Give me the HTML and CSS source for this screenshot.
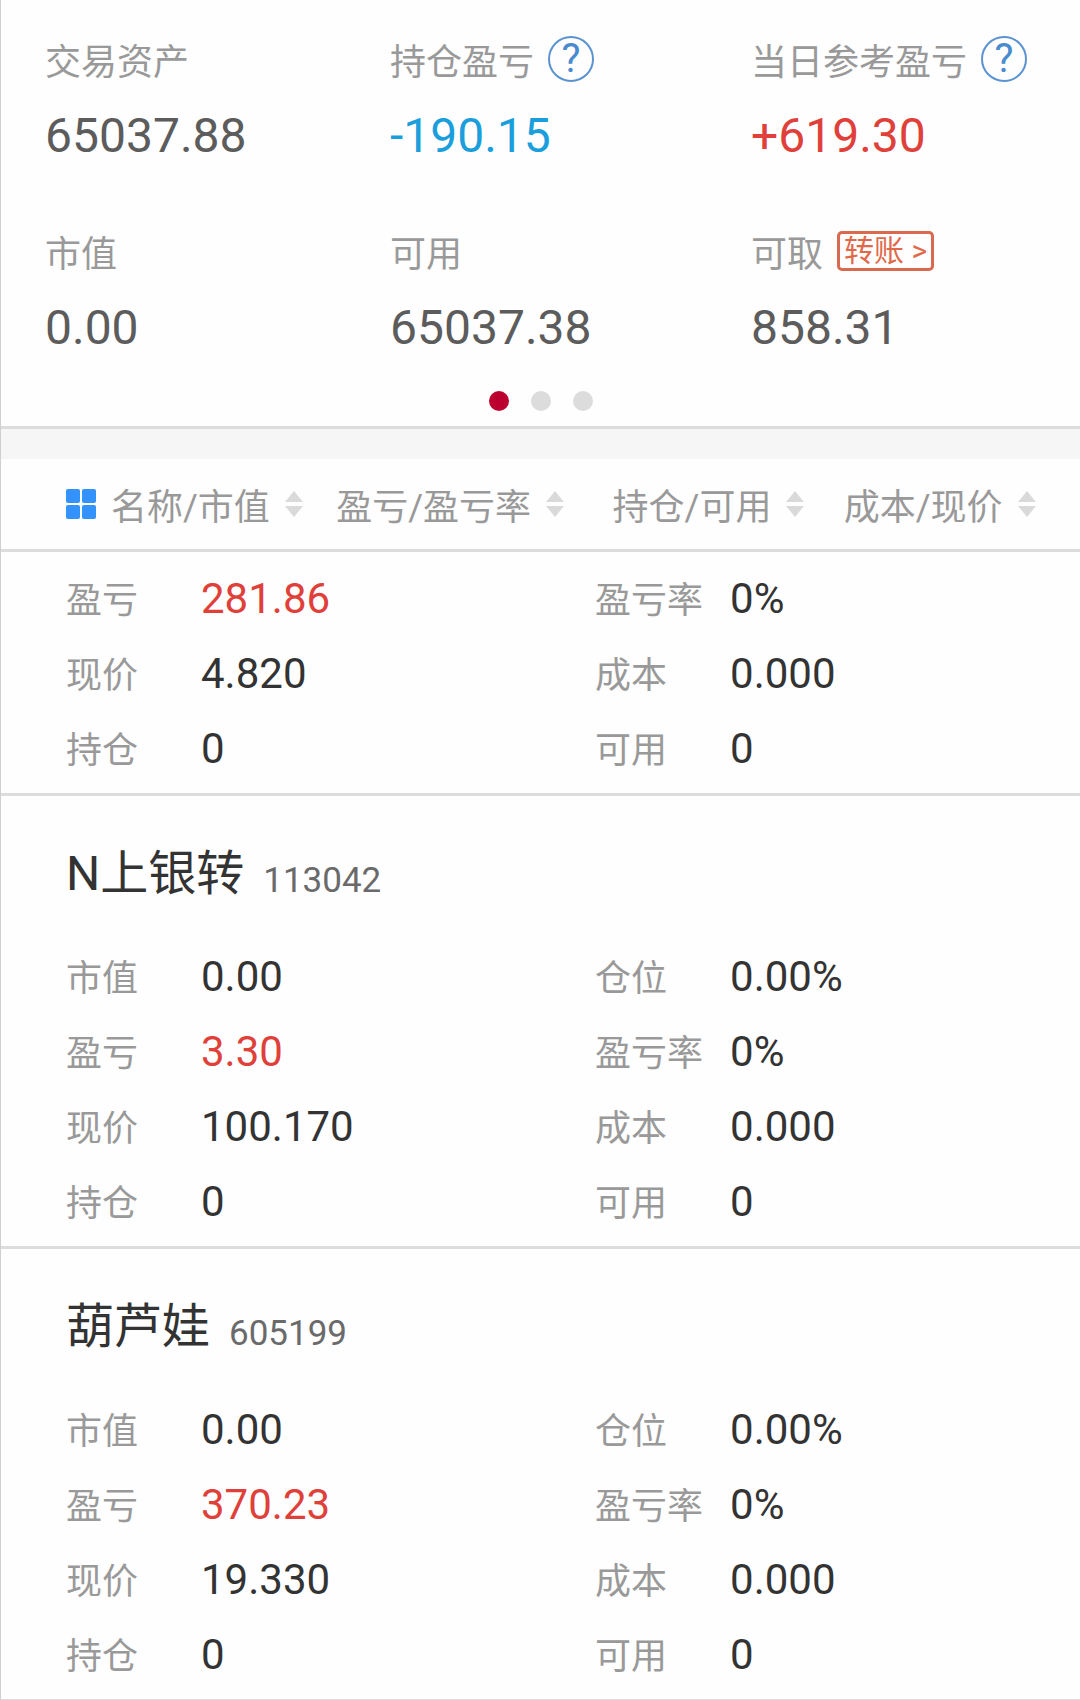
FILE: index.html
```html
<!DOCTYPE html>
<html lang="zh-CN">
<head>
  <meta charset="UTF-8" />
  <meta name="viewport" content="width=device-width, initial-scale=1.0" />
  <title>持仓</title>
  <link rel="stylesheet" href="styles.css">
</head>
<body>
  <section class="summary">
    <div class="summary-grid">
      <div class="cell">
        <div class="cell-label">交易资产</div>
        <div class="cell-value">65037.88</div>
      </div>
      <div class="cell">
        <div class="cell-label">持仓盈亏 <button class="help">?</button></div>
        <div class="cell-value down">-190.15</div>
      </div>
      <div class="cell">
        <div class="cell-label">当日参考盈亏 <button class="help">?</button></div>
        <div class="cell-value up">+619.30</div>
      </div>
      <div class="cell">
        <div class="cell-label">市值</div>
        <div class="cell-value">0.00</div>
      </div>
      <div class="cell">
        <div class="cell-label">可用</div>
        <div class="cell-value">65037.38</div>
      </div>
      <div class="cell">
        <div class="cell-label">可取 <button class="transfer">转账 &gt;</button></div>
        <div class="cell-value">858.31</div>
      </div>
    </div>
    <div class="dots">
      <span class="dot active"></span>
      <span class="dot"></span>
      <span class="dot"></span>
    </div>
  </section>

  <nav class="sort-bar">
    <button class="sort">
      <svg class="grid-icon" viewBox="0 0 30 30">
        <rect x="0" y="0" width="14" height="14" rx="2" />
        <rect x="16" y="0" width="14" height="14" rx="2" />
        <rect x="0" y="16" width="14" height="14" rx="2" />
        <rect x="16" y="16" width="14" height="14" rx="2" />
      </svg>
      名称/市值
      <svg class="arrows" viewBox="0 0 18 28"><path d="M9 1L18 12H0ZM0 16H18L9 27Z" /></svg>
    </button>
    <button class="sort">
      盈亏/盈亏率
      <svg class="arrows" viewBox="0 0 18 28"><path d="M9 1L18 12H0ZM0 16H18L9 27Z" /></svg>
    </button>
    <button class="sort">
      持仓/可用
      <svg class="arrows" viewBox="0 0 18 28"><path d="M9 1L18 12H0ZM0 16H18L9 27Z" /></svg>
    </button>
    <button class="sort">
      成本/现价
      <svg class="arrows" viewBox="0 0 18 28"><path d="M9 1L18 12H0ZM0 16H18L9 27Z" /></svg>
    </button>
  </nav>

  <main>
    <article class="stock">
      <dl class="details">
        <div class="item"><dt>盈亏</dt><dd class="up">281.86</dd></div>
        <div class="item"><dt>盈亏率</dt><dd>0%</dd></div>
        <div class="item"><dt>现价</dt><dd>4.820</dd></div>
        <div class="item"><dt>成本</dt><dd>0.000</dd></div>
        <div class="item"><dt>持仓</dt><dd>0</dd></div>
        <div class="item"><dt>可用</dt><dd>0</dd></div>
      </dl>
    </article>

    <article class="stock">
      <header class="stock-head">
        <h2>N上银转</h2>
        <span class="code">113042</span>
      </header>
      <dl class="details">
        <div class="item"><dt>市值</dt><dd>0.00</dd></div>
        <div class="item"><dt>仓位</dt><dd>0.00%</dd></div>
        <div class="item"><dt>盈亏</dt><dd class="up">3.30</dd></div>
        <div class="item"><dt>盈亏率</dt><dd>0%</dd></div>
        <div class="item"><dt>现价</dt><dd>100.170</dd></div>
        <div class="item"><dt>成本</dt><dd>0.000</dd></div>
        <div class="item"><dt>持仓</dt><dd>0</dd></div>
        <div class="item"><dt>可用</dt><dd>0</dd></div>
      </dl>
    </article>

    <article class="stock">
      <header class="stock-head">
        <h2>葫芦娃</h2>
        <span class="code">605199</span>
      </header>
      <dl class="details">
        <div class="item"><dt>市值</dt><dd>0.00</dd></div>
        <div class="item"><dt>仓位</dt><dd>0.00%</dd></div>
        <div class="item"><dt>盈亏</dt><dd class="up">370.23</dd></div>
        <div class="item"><dt>盈亏率</dt><dd>0%</dd></div>
        <div class="item"><dt>现价</dt><dd>19.330</dd></div>
        <div class="item"><dt>成本</dt><dd>0.000</dd></div>
        <div class="item"><dt>持仓</dt><dd>0</dd></div>
        <div class="item"><dt>可用</dt><dd>0</dd></div>
      </dl>
    </article>
  </main>
</body>
</html>
```
FILE: styles.css
```css
* {
  box-sizing: border-box;
}

body {
  margin: 0;
  border-left: 1px solid #cfcfcf;
  background: #fefefe;
  color: #333;
  font-family: Roboto, "Noto Sans CJK SC", sans-serif;
}

button {
  padding: 0;
  border: none;
  background: none;
  font-family: inherit;
  cursor: pointer;
}

/* account summary */
.summary {
  padding: 36px 0 15px;
  border-bottom: 3px solid #dcdcdc;
}

.summary-grid {
  display: grid;
  grid-template-columns: 345fr 361fr 329fr;
  row-gap: 64px;
  padding-left: 44px;
}

.cell-label {
  display: flex;
  align-items: center;
  gap: 14px;
  height: 46px;
  margin-bottom: 26px;
  font-size: 36px;
  color: #999;
  white-space: nowrap;
}

.cell-value {
  font-size: 48px;
  line-height: 56px;
  color: #5c5c5c;
}

.cell-value.down {
  color: #1a9fdc;
}

.cell-value.up,
.up {
  color: #e0403a;
}

.help {
  width: 46px;
  height: 46px;
  border: 2px solid #5b93d0;
  border-radius: 50%;
  font-size: 40px;
  line-height: 42px;
  color: #4a8bd0;
}

.transfer {
  height: 40px;
  padding: 0 4px;
  border: 3px solid #d9694f;
  border-radius: 5px;
  font-size: 30px;
  line-height: 34px;
  color: #e0694a;
}

.dots {
  display: flex;
  justify-content: center;
  gap: 22px;
  margin-top: 35px;
}

.dot {
  width: 20px;
  height: 20px;
  border-radius: 50%;
  background: #dcdcdc;
}

.dot.active {
  background: #bb0030;
}

/* sort header */
.sort-bar {
  display: grid;
  grid-template-columns: 270fr 276fr 231fr 236fr;
  height: 123px;
  padding-left: 65px;
  border-top: 30px solid #f6f6f6;
  border-bottom: 3px solid #dcdcdc;
}

.sort {
  display: flex;
  align-items: center;
  gap: 15px;
  font-size: 36px;
  color: #999;
  white-space: nowrap;
}

.grid-icon {
  width: 30px;
  height: 30px;
  fill: #3393fa;
}

.arrows {
  width: 18px;
  height: 28px;
  fill: #dadada;
}

/* holdings */
.stock {
  padding: 9px 0 7px 65px;
  border-bottom: 3px solid #dcdcdc;
}

.stock:last-child {
  border-bottom-width: 1px;
}

.stock-head {
  display: flex;
  align-items: flex-end;
  gap: 19px;
  height: 134px;
  padding-bottom: 37px;
}

.stock-head h2 {
  margin: 0;
  font-size: 48px;
  font-weight: 400;
  line-height: 56px;
}

.code {
  font-size: 35px;
  line-height: 42px;
  color: #6a6a6a;
}

.details {
  display: grid;
  grid-template-columns: 12fr 11fr;
  margin: 0;
}

.item {
  display: flex;
  align-items: baseline;
  height: 75px;
  line-height: 75px;
}

.item dt {
  width: 135px;
  font-size: 36px;
  color: #999;
}

.item dd {
  margin: 0;
  font-size: 42px;
}
```
